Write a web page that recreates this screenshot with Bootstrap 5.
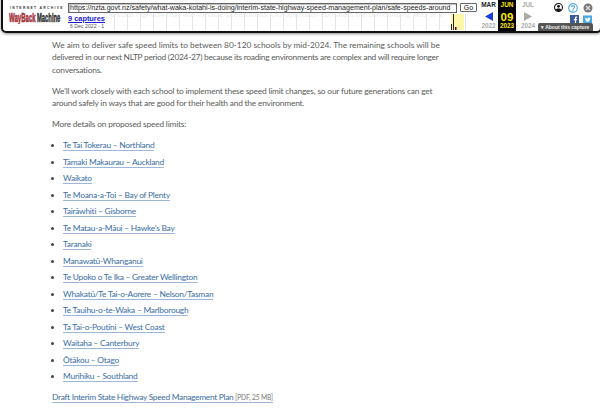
<!DOCTYPE html>
<html lang="en">
<head>
<meta charset="utf-8">
<title>Safe speeds around schools</title>
<link href="https://cdn.jsdelivr.net/npm/bootstrap@5.3.0/dist/css/bootstrap.min.css" rel="stylesheet">
<style>
html,body{height:409px;overflow:hidden;background:#fff}
body{position:relative;font-family:Lato,"Liberation Sans",sans-serif;color:#5b5b5b}
.article{padding:8px 0 0 52px;width:460px;font-size:8.4px;line-height:12.4px;letter-spacing:-.2px}
.article p{margin:0 0 8.6px}
.article p.under-bar{margin:0 0 18.6px;padding-left:51px;white-space:nowrap}
.article p.list-intro{margin-bottom:6.6px}
.line-open{letter-spacing:-.03px}
.line-tight{letter-spacing:-.27px}
.article ul{margin:0 0 6.6px;padding:0 0 0 11px;list-style:disc;letter-spacing:-.24px}
.article li{height:16.5px;line-height:16.5px;white-space:nowrap}
.article li::marker{font-size:8px;color:#444}
.article a{color:#3a6ea5;text-decoration:none;border-bottom:1px solid #9db8d6}
.article a.plan-link{letter-spacing:-.3px}
.pdf-note{font-size:6.6px;color:#777;letter-spacing:-.1px}
.wb-bar{position:absolute;left:1px;right:-2px;top:-3px;height:36px;background:rgba(255,255,255,.88);border:2px solid #111;border-radius:0 0 5px 5px;box-shadow:0 1px 3px rgba(0,0,0,.45);font-family:"Liberation Sans",sans-serif}
.wb-logo{width:65px;flex:none;padding:6px 0 0 6px}
.wb-logo-top{font-size:3.4px;letter-spacing:1.3px;line-height:6px;color:#333;white-space:nowrap;padding-left:1px;font-weight:700}
.wb-main{width:411px;flex:none;padding-top:4px}
.wb-url{width:389px;height:10px;border:1px solid #666;box-shadow:inset 1px 1px 1px #bbb;font-size:7.1px;line-height:8px;padding:0 1px;color:#222;overflow:hidden;white-space:nowrap;background:#fff}
.wb-go{width:17px;height:9px;margin-left:3px;border:1px solid #666;border-radius:1px;font-size:7px;line-height:7.5px;text-align:center;color:#111;background:#fff}
.wb-lower{height:18px;position:relative}
.wb-cap{position:absolute;left:0;top:1px;width:33px;z-index:1}
.wb-cap a{color:#1a1ad6;font-size:7.4px;font-weight:700;text-decoration:underline;display:block;line-height:9px;white-space:nowrap}
.wb-cap span{font-size:5.2px;color:#555;display:block;line-height:6px;white-space:nowrap;padding-left:2px}
.wb-spark{position:absolute;left:46px;right:2px;top:1px;height:16px;background:repeating-linear-gradient(90deg,#e4e4e4 0,#e4e4e4 1px,transparent 1px,transparent 13px)}
.wb-spark-year{position:absolute;left:337px;top:0;width:13px;height:16px;background:#fcf8a8}
.wb-spark-tick{position:absolute;bottom:0;width:1px;background:#222}
.wb-spark-tick.pink{background:#e05a9a}
.wb-cal{width:61px;flex:none;text-align:center;font-weight:700}
.wb-cal-col{flex:0 0 19px;font-size:6.4px;color:#aaa;padding-top:2px;line-height:8px}
.wb-cal-col.later{flex:1 1 0}
.wb-cal-col b{color:#222;display:block}
.wb-cal-arrow{display:block;margin:3px auto 1px}
.wb-cal-now{flex:0 0 18px;background:#000;color:#ffe800;font-size:6.4px;line-height:8px;padding-top:2px}
.wb-cal-day{font-size:11.5px;line-height:12px;display:block;letter-spacing:.2px;margin:2px 0 -1px}
.wb-tools{flex:1 1 0}
.wb-about{position:absolute;right:7px;bottom:0;width:55px;height:8px;background:#555;color:#eee;font-size:5px;line-height:8px;font-weight:700;border-radius:2px 2px 0 0;padding-left:3px;white-space:nowrap;margin:0}
.wb-icons{padding:4px 7px 0 0;gap:5px}
.wb-share{padding:2px 8px 0 0}
</style>
</head>
<body>
<main class="article">
<p class="under-bar">the state highway may use variable speed limits. Our approach considers the surrounding area of a</p>
<p><span class="line-open">We aim to deliver safe speed limits to between 80-120 schools by mid-2024. The remaining schools will be</span><br><span class="line-tight">delivered in our next NLTP period (2024-27) because its roading environments are complex and will require longer</span><br>conversations.</p>
<p>We’ll work closely with each school to implement these speed limit changes, so our future generations can get<br>around safely in ways that are good for their health and the environment.</p>
<p class="list-intro">More details on proposed speed limits:</p>
<ul>
<li><a href="#">Te Tai Tokerau – Northland</a></li>
<li><a href="#">Tāmaki Makaurau – Auckland</a></li>
<li><a href="#">Waikato</a></li>
<li><a href="#">Te Moana-a-Toi – Bay of Plenty</a></li>
<li><a href="#">Tairāwhiti – Gisborne</a></li>
<li><a href="#">Te Matau-a-Māui – Hawke’s Bay</a></li>
<li><a href="#">Taranaki</a></li>
<li><a href="#">Manawatū-Whanganui</a></li>
<li><a href="#">Te Upoko o Te Ika – Greater Wellington</a></li>
<li><a href="#">Whakatū/Te Tai-o-Aorere – Nelson/Tasman</a></li>
<li><a href="#">Te Tauihu-o-te-Waka – Marlborough</a></li>
<li><a href="#">Ta Tai-o-Poutini – West Coast</a></li>
<li><a href="#">Waitaha – Canterbury</a></li>
<li><a href="#">Ōtākou – Otago</a></li>
<li><a href="#">Murihiku – Southland</a></li>
</ul>
<p><a class="plan-link" href="#">Draft Interim State Highway Speed Management Plan <span class="pdf-note">[PDF, 25 MB]</span></a></p>
</main>

<div class="wb-bar d-flex">
  <div class="wb-logo">
    <div class="wb-logo-top">INTERNET ARCHIVE</div>
    <div class="d-flex">
      <svg width="28" height="13" viewBox="0 0 65 15" preserveAspectRatio="none" role="img" aria-label="WayBack"><text x="0" y="13" font-family="Liberation Sans" font-weight="700" font-size="14" fill="#a4323a" stroke="#a4323a" stroke-width=".7">WayBack</text></svg>
      <svg width="25" height="13" viewBox="0 0 60 15" preserveAspectRatio="none" role="img" aria-label="Machine"><text x="0" y="13" font-family="Liberation Sans" font-weight="700" font-size="14" fill="#2c2c2c" stroke="#2c2c2c" stroke-width=".5">Machine</text></svg>
    </div>
  </div>
  <div class="wb-main">
    <div class="d-flex">
      <div class="wb-url">https://nzta.govt.nz/safety/what-waka-kotahi-is-doing/interim-state-highway-speed-management-plan/safe-speeds-around</div>
      <div class="wb-go">Go</div>
    </div>
    <div class="wb-lower">
      <div class="wb-spark"><div class="wb-spark-year"></div>
        <div class="wb-spark-tick" style="left:337px;height:6px"></div>
        <div class="wb-spark-tick" style="left:339px;height:16px"></div>
        <div class="wb-spark-tick" style="left:341px;height:3px"></div>
        <div class="wb-spark-tick pink" style="left:342px;height:3px"></div>
      </div>
      <div class="wb-cap"><a href="#">9 captures</a><span>6 Dec 2022 - 1</span></div>
    </div>
  </div>
  <div class="wb-cal d-flex">
    <div class="wb-cal-col"><b>MAR</b>
      <svg class="wb-cal-arrow" width="8" height="9" viewBox="0 0 8 9" aria-hidden="true"><path d="M8 0V9L0 4.5Z" fill="#1a3fd6"/></svg>
      <div>2022</div></div>
    <div class="wb-cal-now">JUN<span class="wb-cal-day">09</span>2023</div>
    <div class="wb-cal-col later">JUL
      <svg class="wb-cal-arrow" width="8" height="9" viewBox="0 0 8 9" aria-hidden="true"><path d="M0 0V9L8 4.5Z" fill="#aaa"/></svg>
      <div>2024</div></div>
  </div>
  <div class="wb-tools">
    <div class="wb-icons d-flex justify-content-end">
      <svg width="9" height="9" viewBox="0 0 10 10" aria-hidden="true"><circle cx="5" cy="5" r="4.4" fill="#fff" stroke="#111" stroke-width="1.2"/><circle cx="5" cy="3.7" r="1.6" fill="#111"/><path d="M1.8 7.6C2.6 5.6 7.4 5.6 8.2 7.6 6.5 9.6 3.5 9.6 1.8 7.6Z" fill="#111"/></svg>
      <svg width="10" height="10" viewBox="0 0 10 10" aria-hidden="true"><circle cx="5" cy="5" r="4.3" fill="#fff" stroke="#5aaee0" stroke-width="1.2"/><path d="M3.5 3.9C3.5 2.2 6.6 2.2 6.6 3.9 6.6 5 5 5 5 6.4" fill="none" stroke="#5aaee0" stroke-width="1.1"/><circle cx="5" cy="7.7" r=".7" fill="#5aaee0"/></svg>
      <svg width="10" height="10" viewBox="0 0 10 10" aria-hidden="true"><circle cx="5" cy="5" r="4.5" fill="#777"/><path d="M3 3 7 7M7 3 3 7" stroke="#ddd" stroke-width="1.4"/></svg>
    </div>
    <div class="wb-share d-flex justify-content-end gap-1">
      <svg width="9" height="9" viewBox="0 0 9 9" aria-hidden="true"><rect width="9" height="9" fill="#3b5a98"/><path d="M4.9 9V5.2H3.8V3.9H4.9V3C4.9 2 5.5 1.5 6.4 1.5H7.2V2.7H6.6C6.2 2.7 6.1 2.9 6.1 3.2V3.9H7.2L7 5.2H6.1V9Z" fill="#fff"/></svg>
      <svg width="9" height="9" viewBox="0 0 10 9" aria-hidden="true"><rect width="10" height="9" fill="#48a9e6"/><path d="M2 6.6C4.8 8 8 6.5 7.9 3.3L8.5 2.6 7.7 2.8C7 1.7 5.1 2.3 5.4 3.7 4.2 3.6 3.2 3.1 2.5 2.3 2.1 3 2.3 3.8 3 4.3L2.4 4.1C2.4 4.8 2.9 5.3 3.6 5.5L3 5.5C3.2 6 3.7 6.3 4.2 6.4 3.6 6.7 2.8 6.8 2 6.6Z" fill="#fff"/></svg>
    </div>
  </div>
  <p class="wb-about">▾ About this capture</p>
</div>

<script src="https://cdn.jsdelivr.net/npm/bootstrap@5.3.0/dist/js/bootstrap.bundle.min.js"></script>
</body>
</html>
